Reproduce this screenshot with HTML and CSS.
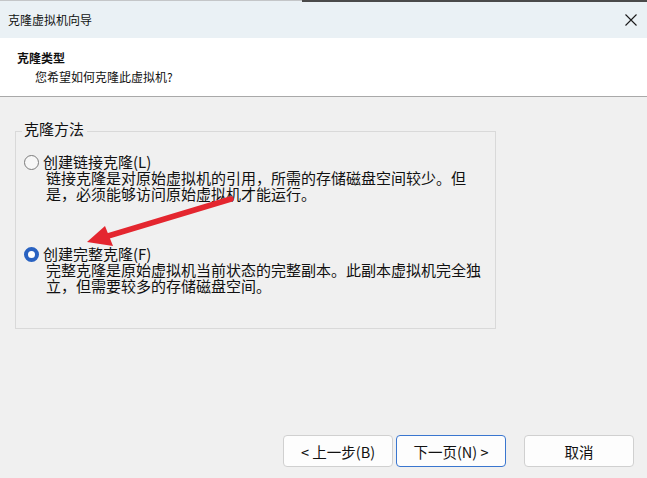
FILE: index.html
```html
<!DOCTYPE html>
<html lang="zh-CN">
<head>
    <meta charset="UTF-8">
    <meta name="viewport" content="width=device-width, initial-scale=1.0">
    <title>克隆虚拟机向导</title>
    <link rel="stylesheet" href="styles.css">
</head>
<body>
    <div class="window">
        <div class="top-line">
            <div class="top-line-left"></div>
            <div class="top-line-right"></div>
        </div>

        <div class="title-bar">
            <span class="title-text">克隆虚拟机向导</span>
            <svg class="close-icon" width="12" height="12" viewBox="0 0 12 12">
                <path d="M0.5 0.5 L11.5 11.5 M11.5 0.5 L0.5 11.5" stroke="#1a1a1a" stroke-width="1.1" fill="none"/>
            </svg>
        </div>

        <header class="page-header">
            <h1>克隆类型</h1>
            <p>您希望如何克隆此虚拟机?</p>
        </header>

        <main class="content">
            <fieldset class="group-box">
                <legend>克隆方法</legend>
                <div class="options">
                    <div class="option">
                        <div class="option-label">
                            <span class="radio"></span>
                            <span>创建链接克隆(L)</span>
                        </div>
                        <p class="option-desc">链接克隆是对原始虚拟机的引用，所需的存储磁盘空间较少。但<br>是，必须能够访问原始虚拟机才能运行。</p>
                    </div>
                    <div class="option">
                        <div class="option-label">
                            <span class="radio checked"></span>
                            <span>创建完整克隆(F)</span>
                        </div>
                        <p class="option-desc">完整克隆是原始虚拟机当前状态的完整副本。此副本虚拟机完全独<br>立，但需要较多的存储磁盘空间。</p>
                    </div>
                </div>
            </fieldset>
        </main>

        <footer class="button-bar">
            <button class="btn">&lt; 上一步(B)</button>
            <button class="btn btn-default">下一页(N) &gt;</button>
            <button class="btn btn-cancel">取消</button>
        </footer>

        <!-- annotation arrow drawn over the dialog -->
        <svg class="arrow" width="647" height="478" viewBox="0 0 647 478">
            <line x1="231" y1="199" x2="108" y2="236" stroke="#e4262f" stroke-width="5.5" stroke-linecap="round"/>
            <polygon points="87,242 105,226 113,246" fill="#e4262f"/>
        </svg>
    </div>
</body>
</html>
```

FILE: styles.css
```css
body {
    margin: 0;
    padding: 0;
    font-family: "Noto Sans CJK SC", "Noto Sans", sans-serif;
    color: #111;
    background-color: #f0f0f0;
}

.window {
    position: relative;
    width: 647px;
    height: 478px;
    display: flex;
    flex-direction: column;
    background-color: #f0f0f0;
    overflow: hidden;
}

.top-line {
    display: flex;
    height: 2px;
    background-color: #eaf1f5;
}

.top-line-left {
    width: 302px;
    height: 1px;
    background-color: #c4c6c8;
}

.top-line-right {
    flex: 1;
    background-color: #4a4a4a;
}

.title-bar {
    height: 36px;
    display: flex;
    align-items: center;
    justify-content: space-between;
    padding: 0 10px 0 8px;
    background-color: #eaf1f5;
    font-size: 12px;
}

.title-text {
    line-height: 16px;
}

.close-icon {
    display: block;
}

.page-header {
    height: 59px;
    box-sizing: border-box;
    padding: 10px 0 0 17px;
    background-color: #fff;
    border-bottom: 1px solid #a9a9a9;
}

.page-header h1 {
    margin: 0;
    font-size: 12px;
    font-weight: bold;
    line-height: 19px;
}

.page-header p {
    margin: 0 0 0 18px;
    font-size: 12px;
    line-height: 19px;
}

.content {
    flex: 1;
    padding: 0 15px;
}

.group-box {
    width: 481px;
    box-sizing: border-box;
    margin: 24px 0 0 0;
    padding: 0;
    border: 1px solid #d9d9d9;
    font-size: 15px;
}

.group-box legend {
    margin-left: 6px;
    padding: 0 3px 4px 2px;
    line-height: 16px;
}

.options {
    padding: 13px 8px 34px 8px;
}

.option + .option {
    margin-top: 44px;
}

.option-label {
    display: flex;
    align-items: center;
    gap: 4px;
    line-height: 16px;
}

.radio {
    width: 15px;
    height: 15px;
    box-sizing: border-box;
    border-radius: 50%;
    border: 1px solid #7b7b7b;
    background-color: #f7f7f7;
    flex-shrink: 0;
}

.radio.checked {
    border: 4.5px solid #2962c1;
    background-color: #fff;
}

.option-desc {
    margin: 0 0 0 22px;
    line-height: 16px;
    white-space: nowrap;
}

.button-bar {
    display: flex;
    justify-content: flex-end;
    padding: 0 13px 11px 0;
}

.btn {
    width: 110px;
    height: 32px;
    padding: 0;
    font-family: "Noto Sans CJK SC", "Noto Sans", sans-serif;
    font-size: 14.5px;
    color: #111;
    background-color: #fdfdfd;
    border: 1px solid #d0d0d0;
    border-radius: 4px;
    cursor: pointer;
}

.btn + .btn {
    margin-left: 3px;
}

.btn-default {
    border-color: #3a76cf;
}

.btn.btn-cancel {
    margin-left: 18px;
}

.arrow {
    position: absolute;
    left: 0;
    top: 0;
    pointer-events: none;
}
```
